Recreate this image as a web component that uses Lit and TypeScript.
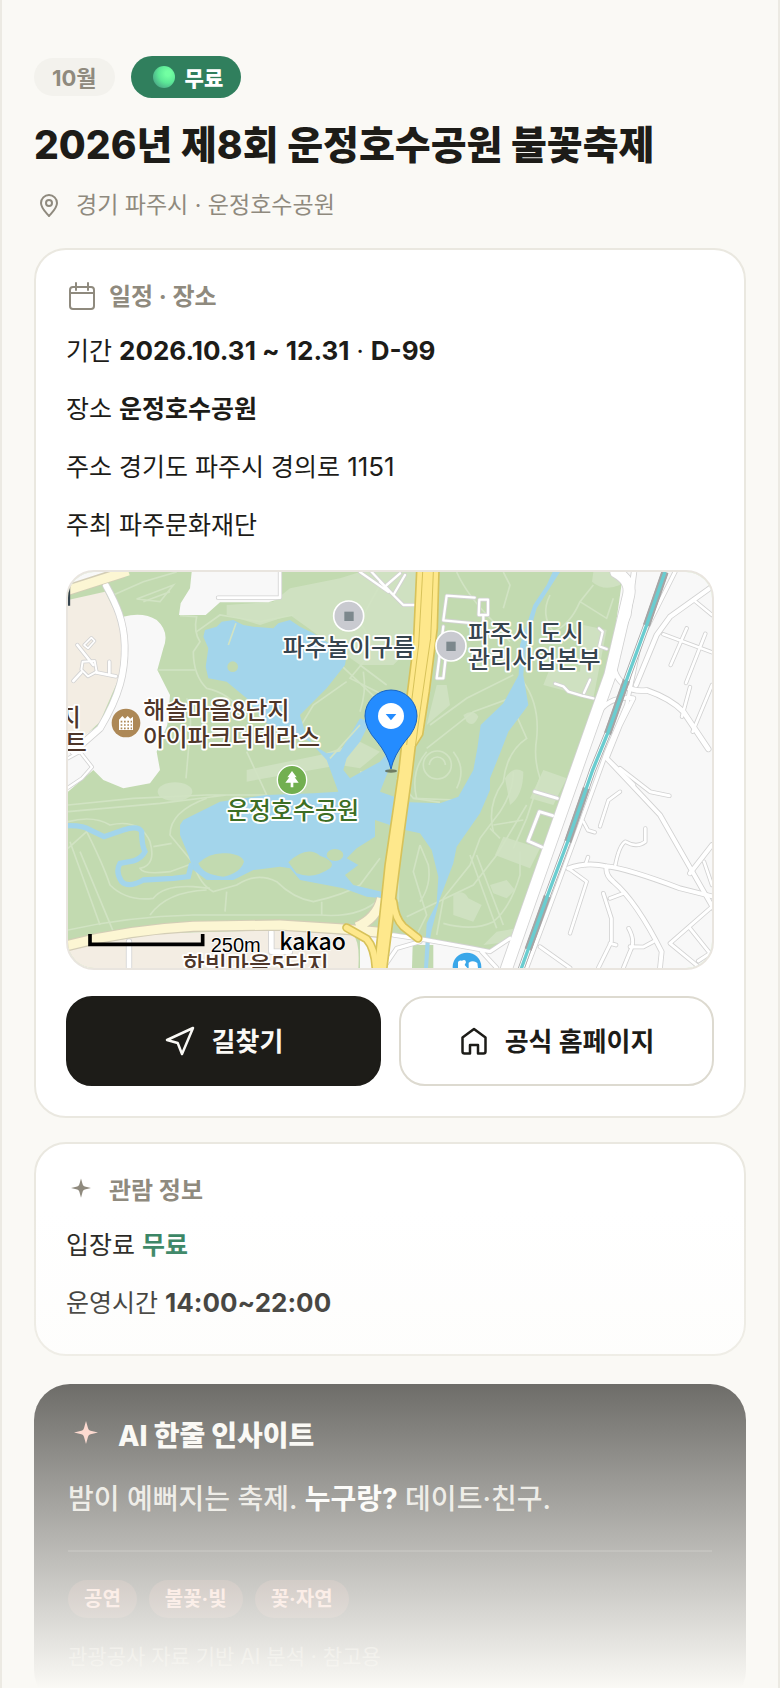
import { LitElement, html, css, svg } from "lit";
import { customElement } from "lit/decorators.js";

const STREETS: [string, number][] = [
  ["M138 62C170 120 192 170 194 240C196 320 180 390 120 490L40 560", 18],
  ["M52 240L100 300", 8],
  ["M72 240L94 218L104 228L84 250Z", 5],
  ["M68 290L104 288L110 320L84 334L64 314Z", 6],
  ["M64 322L40 348M108 322L168 334M148 290V328", 8],
  ["M24 580L60 560L96 606L66 640L24 668", 7],
  ["M474 98H660V21", 8],
  ["M960 50L1030 120H1064M900 21L985 80M935 21L1000 90M1035 30L1000 90M1020 25L980 60", 7],
  ["M1244 98L1160 92L1150 166L1252 176M1258 104H1284V150H1256ZM1150 184L1130 340H1150L1165 210M1270 150V176", 7],
  ["M1485 356L1510 364L1525 380L1565 392L1600 400M1572 384L1590 344M1617 190L1628 200L1618 244L1640 252", 7],
  ["M1424 680L1492 700M1478 752L1438 740L1404 828L1445 846", 9],
  ["M1668 21C1700 40 1712 60 1706 90L1650 330L1600 470L1385 1080L1340 1209", 34],
  ["M1722 21L1705 150L1660 260Q1650 330 1700 365Q1720 380 1760 376Q1830 400 1870 440L1945 552", 14],
  ["M1845 21L1740 230L1700 420L1640 560L1560 780L1460 1050L1400 1209", 10],
  ["M1956 65L1830 155L1790 210L1728 360", 13],
  ["M1956 262L1810 208M1880 190L1832 300M1936 206L1878 354M1890 366L1866 455M1956 360L1898 500M1900 104L1956 150", 8],
  ["M1610 450Q1650 390 1720 400L1680 480L1640 580L1720 660M1640 580L1800 750L1960 1030", 12],
  ["M1680 610L1770 680L1828 692", 9],
  ["M1680 680L1645 706L1620 784M1756 790V830Q1730 850 1696 830Q1678 840 1666 900", 8],
  ["M1956 840L1890 925M1525 910Q1580 890 1640 904Q1700 910 1860 970L1956 994M1640 904Q1635 930 1660 950Q1730 1010 1805 1160L1800 1209", 12],
  ["M1525 910L1580 950L1530 1105M1584 876L1576 900M1570 770L1584 796L1604 802M1932 890L1956 960", 8],
  ["M1630 985L1654 1060V1130L1615 1209M1690 985L1650 1000M1706 1090Q1728 1130 1710 1160L1690 1209M1710 1145L1750 1146L1780 1130M1650 1135L1668 1140", 9],
  ["M1956 1025L1830 1135L1920 1209M1890 1090L1950 1165L1915 1188M1440 1145L1530 1209", 9],
  ["M1000 1110L1100 1125L1240 1150L1290 1160L1350 1120M1265 1160L1310 1209M1080 1130L1010 1150L970 1209", 10],
  ["M207 1130V1209M634 1100V1160H690", 14],
];

const TRAILS = [
  "M360 152L410 155Q400 200 420 230L400 260Q400 330 440 370Q500 380 560 450",
  "M295 315H405M380 400Q400 440 385 560L378 640",
  "M230 102L340 60L300 110ZM250 110L330 80",
  "M160 90L250 50L350 21M410 200L480 150L600 170L700 150",
  "M24 720L220 700L440 690L620 690L560 560M24 740L300 715L500 690",
  "M24 770Q100 750 150 780Q240 760 270 830Q290 900 240 910Q250 930 330 920L400 895",
  "M440 700Q330 740 330 810L400 895M280 845L335 835",
  "M24 850L80 800Q130 900 150 960Q200 1010 280 1000Q310 960 400 965L450 970M30 830L120 1080M60 860L160 1100",
  "M400 895Q420 960 460 980L530 960Q590 920 650 950Q700 1000 760 1010Q850 990 900 960L960 880",
  "M270 1050Q320 980 440 975M500 980L495 1040M24 1095Q200 1055 400 1050H780Q900 1060 960 1000",
  "M785 1010V1050M860 350L760 420L700 520M920 280L870 340L990 400M800 260L990 440",
  "M900 300L980 360M910 320Q920 380 900 440M960 60L900 170L950 260",
  "M1190 21Q1220 90 1300 170L1350 230M1330 21L1350 60L1330 130",
  "M1470 90Q1440 150 1480 200Q1530 180 1560 110L1600 60M1560 110L1640 160L1660 100",
  "M1110 480L1220 400L1360 330M1100 550L1240 440L1350 400",
  "M1390 350Q1440 420 1430 520Q1420 580 1440 640L1400 760L1360 850",
  "M1360 430L1400 520Q1340 560 1330 650Q1280 720 1300 800",
  "M1090 600A42 42 0 1 1 1174 600A42 42 0 1 1 1090 600M1108 600A24 24 0 1 1 1156 600",
  "M1070 700Q1050 620 1100 560M1190 670Q1220 610 1180 560M1060 700L1190 705",
  "M1360 620Q1360 680 1320 740L1260 820L1230 900L1150 1000L1130 1110",
  "M1040 1055L1240 960L1310 870L1400 720M1230 870L1310 1090M1250 870L1330 1080M1380 860L1380 930Q1350 1030 1300 1070Q1240 1100 1150 1075",
  "M1080 840L1060 920L1100 1050L1070 1110M1080 840L1105 900Q1115 960 1080 1010M1015 820V1010",
  "M1300 780L1390 765M1290 790L1320 820M1010 640L1060 700L1140 712M900 620L960 640",
];

const RAIL = "M1815 21L1760 180L1705 330L1645 500L1598 615L1525 825L1465 985L1383 1213";

const mapArt = svg`
  <rect class="m-park" x="24" y="21" width="1932" height="1188"/>
  <g class="m-meadow">
    <path d="M500 120L640 110L690 70L840 40L900 21H1070L1060 240L1000 300L900 300L760 200L690 150L600 180L500 150Z"/>
    <path d="M560 615L780 570L900 530L960 560L900 610L840 600L560 650Z"/>
    <ellipse cx="345" cy="680" rx="52" ry="28"/>
    <path d="M1600 21H1690L1680 60Q1630 80 1596 50ZM1570 180L1640 195L1600 400L1450 360L1470 310L1560 320Z"/>
    <path d="M1130 360L1160 360L1170 420L1100 480ZM1210 450Q1240 430 1255 455Q1240 490 1220 470Z"/>
    <path d="M1330 815L1440 850L1410 910L1305 870ZM1180 990Q1210 970 1225 1000L1265 1020L1240 1070L1180 1050Z"/>
    <path d="M1290 960L1340 945L1365 975L1340 1000L1300 985ZM1270 1140L1310 1100L1370 1090L1350 1130Z"/>
    <path d="M1335 640Q1360 600 1390 620Q1390 690 1350 720ZM1450 615L1520 640L1480 720L1410 700Z"/>
  </g>
  <g class="m-trail">${TRAILS.map((d) => svg`<path d=${d}/>`)}</g>

  <g class="m-water">
    <path d="M430 215L435 195L470 185L485 170L520 165L550 180L580 185L640 190L655 175L690 165L720 185L760 205L860 270L855 300L800 370L720 450L735 500L760 540L800 565L840 560L900 460L930 470L900 530L860 580L850 615L870 640L960 590L985 560L1000 580L960 680L1050 712L1140 715L1195 695L1240 615L1252 550L1262 480L1330 415L1376 330L1380 240L1420 120L1460 60L1478 21H1500L1430 130L1396 250L1390 330L1405 420L1345 500L1322 560L1290 640V675L1260 745L1190 845L1180 895L1140 1000L1115 1095L1095 1209H1078L1098 1110L1100 1075L1130 1015L1135 935L1115 855L1080 805L1035 795L945 765L945 815L890 850L860 880L895 900L855 930L880 960L965 980V1000L920 995L850 970L720 945L690 910L660 905L580 915L520 945L440 945L400 915L385 870L360 810V780L370 765L480 710L620 690L760 685L835 680L800 585L750 530L690 500L620 475L560 400L500 350L445 340L437 305L445 250Z"/>
    <path class="m-creek" d="M20 782Q70 780 90 795L132 815L190 795Q235 780 245 800Q245 840 255 860Q245 880 220 888L180 895Q165 920 185 950Q205 970 250 945L340 940L385 935L395 895"/>
  </g>
  <g class="m-island">
    <circle cx="518" cy="305" r="16"/>
    <path d="M415 895Q450 860 500 865Q545 868 552 890Q540 925 490 935Q430 930 415 895Z"/>
    <path d="M685 892Q740 840 780 872Q830 890 810 910Q760 945 710 925Z"/>
    <ellipse cx="825" cy="870" rx="25" ry="18"/>
    <circle cx="795" cy="660" r="16"/>
  </g>
  <path class="m-thin" d="M528 175L505 240M810 580L900 480"/>

  <g class="m-plain">
    <path d="M24 21H200L24 80ZM190 155Q250 140 290 165Q330 200 310 250L292 315L330 390L322 480L290 560L300 615L270 655L190 670L130 645L100 615L24 680V540L120 480L190 350Z"/>
    <path d="M395 21L390 70L362 115L357 150H437L480 112H625L665 100V21Z"/>
    <path d="M1690 21H1956V1209H1330L1360 1120L1530 640L1650 300Z"/>
    <path d="M900 1105L1000 1110L1290 1160L1380 1100L1340 1209H900Z"/>
  </g>
  <path class="m-park" d="M1058 1140H1120V1209H1056Z"/>
  <path class="m-water" d="M1097 1125H1110L1104 1209H1092Z"/>
  <g class="m-block">
    <path d="M24 105L135 80L185 180L185 320L120 470L24 560Z"/>
    <path d="M24 1150L300 1105L660 1095L880 1110Q900 1130 895 1209H24Z"/>
  </g>

  ${STREETS.map(([d, w]) => svg`<path class="m-case" d=${d} stroke-width=${w + 5}/>`)}
  ${STREETS.map(([d, w]) => svg`<path class="m-street" d=${d} stroke-width=${w}/>`)}

  <path class="m-rail-bed" d=${RAIL}/>
  <path class="m-rail-gap" d=${RAIL}/>
  <path class="m-rail-dash" d=${RAIL}/>
  <path class="m-rail" d=${RAIL}/>

  <path class="m-pale-case" d="M20 76L190 21M20 1142Q200 1095 400 1084L660 1080L850 1092L960 1102M890 1086Q950 1060 965 1000"/>
  <path class="m-pale" d="M10 80L205 18M20 1142Q200 1095 400 1084L660 1080L850 1092L960 1102M890 1086Q950 1060 965 1000"/>

  <path class="m-ramp-case" d="M860 1088L920 1122Q945 1150 948 1215M1000 1010Q1005 1060 1030 1085L1074 1120"/>
  <path class="m-main" d="M1070 18H1137L1132 190L1108 380L1088 510L1066 545L1056 630L1026 850L980 1215H942L975 900L1016 620L1040 400L1060 240Z"/>
  <path class="m-ramp" d="M860 1088L920 1122Q945 1150 948 1215M1000 1010Q1005 1060 1030 1085L1074 1120"/>
  <path class="m-median" d="M1088 21L1076 240L1056 400L1040 540M1120 21L1112 220L1080 440L1066 545"/>

  <path class="m-scale" d="M90 1107V1138H428V1107"/>
  <text class="m-meter" x="452" y="1160">250m</text>
  <text class="m-brand" x="658" y="1154">kakao</text>

  <g class="m-label m-brown">
    <text x="-4" y="482">지</text>
    <text x="14" y="558">트</text>
    <text x="250" y="462">해솔마을8단지</text>
    <text x="250" y="542">아이파크더테라스</text>
    <text x="368" y="1226">한빛마을5단지</text>
  </g>
  <path class="m-edge" d="M27 62V122"/>
  <g class="m-label m-slate">
    <text x="668" y="272">파주놀이구름</text>
    <text x="1224" y="230">파주시 도시</text>
    <text x="1224" y="310">관리사업본부</text>
  </g>
  <text class="m-label m-forest" x="500" y="762">운정호수공원</text>

  <g class="m-poi">
    <circle cx="866" cy="153" r="45"/><rect x="853" y="140" width="28" height="28"/>
    <circle cx="1173" cy="243" r="45"/><rect x="1159" y="230" width="28" height="28"/>
  </g>
  <circle cx="198" cy="474" r="43" fill="#ad8856"/>
  <path fill="#fff" d="M177 495V464L187 453L195 461L203 453L211 461L219 455V495Z"/>
  <path stroke="#ad8856" stroke-width="5" stroke-dasharray="5 5" d="M182 470H216M182 480H216M182 490H216"/>
  <circle cx="696" cy="645" r="44" fill="#72af50" stroke="#fff" stroke-width="4"/>
  <path fill="#fff" d="M696 618L710 637H704L716 653H700V667H692V653H676L688 637H682Z"/>
  <circle cx="1221" cy="1206" r="43" fill="#3aa7e9"/>
  <path fill="#fff" d="M1194 1209V1192Q1196 1184 1206 1187Q1217 1182 1218 1192L1214 1200L1222 1209ZM1226 1209V1193Q1240 1184 1252 1194L1254 1209Z"/>

  <ellipse cx="993" cy="618" rx="18" ry="5" fill="#59644f" opacity=".8"/>
  <path fill="#248cff" stroke="#1764c4" stroke-width="3" d="M993 612Q984 570 950 528Q915 490 915 453A78 78 0 0 1 1071 453Q1071 490 1036 528Q1002 570 993 612Z"/>
  <circle cx="993" cy="453" r="39" fill="#fff"/>
  <path fill="#248cff" d="M977 447H1009L993 466Z"/>
`;

const calendar = svg`<rect x="4" y="5" width="24" height="22" rx="3"/><path d="M4 11H28M10 1V8M22 1V8"/>`;
const sparkle = svg`<path class="solid" d="M15 2.500L16.700 8.500Q17.200 10.200 18.800 10.600L25 12L18.800 13.600Q17.200 14 16.700 15.600L15 21.700L13.300 15.600Q12.800 14 11.200 13.600L5 12L11.200 10.600Q12.800 10.200 13.300 8.500Z"/>`;

@customElement("app-root")
export class AppRoot extends LitElement {
  static styles = css`
    :host {
      display: block;
      position: relative;
      box-sizing: border-box;
      height: 100vh;
      overflow: hidden;
      padding: 56px 32px 0;
      border: solid #eceae3;
      border-width: 0 2px;
      background: #faf9f5;
      color: #1d1c18;
      font-family: Inter, "Noto Sans CJK KR", sans-serif;
    }
    * { box-sizing: border-box; }
    h1, h2, p, dl, dd, ul { margin: 0; padding: 0; }
    .icon {
      flex: none;
      fill: none;
      stroke: currentColor;
      stroke-width: 2;
      stroke-linecap: round;
      stroke-linejoin: round;
    }
    .solid { fill: currentColor; stroke: none; }

    .pills { display: flex; align-items: center; gap: 16px; }
    .pill {
      display: flex;
      align-items: center;
      height: 38px;
      padding: 0 18px 3px;
      border-radius: 21px;
      background: #f3f2ed;
      color: #8f8a7e;
      font-size: 22px;
      font-weight: 700;
    }
    .pill.free {
      gap: 10px;
      height: 42px;
      padding: 0 18px 0 22px;
      background: #307f5d;
      color: #fff;
      font-weight: 800;
      font-size: 21px;
    }
    .orb {
      width: 22px;
      height: 22px;
      border-radius: 50%;
      background: radial-gradient(circle at 68% 34%, #72ffa2 0 12%, #5ce897 45%, #4cad88 78%, #659eac 100%);
    }

    h1 {
      margin-top: 20px;
      font-size: 39px;
      line-height: 54px;
      font-weight: 800;
    }
    .place {
      display: flex;
      align-items: center;
      gap: 15px;
      margin-top: 16px;
      padding-left: 3px;
      color: #8f8a7e;
      font-size: 23px;
      line-height: 34px;
    }

    .card {
      margin-top: 24px;
      padding: 30px;
      border: 2px solid #eae8e0;
      border-radius: 32px;
      background: #fff;
    }
    .place + .card { margin-top: 26px; }
    .card h2 {
      display: flex;
      align-items: center;
      gap: 13px;
      color: #8f8a7e;
      font-size: 24px;
      line-height: 34px;
      font-weight: 700;
    }
    .row {
      margin-top: 16px;
      font-size: 25px;
      line-height: 42px;
    }
    .row dt, .row dd { display: inline; }
    .num { font-size: 26px; }
    strong { font-weight: 700; }
    .green { color: #307f5d; }

    .map {
      display: block;
      width: 100%;
      height: 400px;
      margin-top: 24px;
      border: 2px solid #e9e5df;
      border-radius: 28px;
      overflow: hidden;
    }
    .actions {
      display: grid;
      grid-template-columns: 1fr 1fr;
      gap: 18px;
      margin-top: 26px;
    }
    .action {
      display: flex;
      align-items: center;
      justify-content: center;
      gap: 16px;
      height: 90px;
      padding: 0 0 3px;
      border: 2px solid #dddad0;
      border-radius: 26px;
      background: #fff;
      color: #1d1c18;
      font: inherit;
      font-size: 26px;
      font-weight: 700;
      text-decoration: none;
    }
    .action.primary {
      border-color: #1d1c18;
      background: #1d1c18;
      color: #faf9f5;
    }
    .action .icon { stroke-width: 2.500; }

    .insight {
      margin-top: 28px;
      padding: 34px;
      border-radius: 36px;
      background: #1d1c18;
      color: #faf9f5;
    }
    .insight h2 {
      display: flex;
      align-items: center;
      gap: 14px;
      font-size: 28px;
      line-height: 34px;
      font-weight: 800;
    }
    .insight .icon { color: #ffbfb0; }
    .summary {
      margin-top: 22px;
      font-size: 28px;
      line-height: 46px;
      font-weight: 500;
      color: #dddbd4;
    }
    .summary strong { color: #fff; }
    .tags {
      display: flex;
      gap: 12px;
      margin-top: 28px;
      padding-top: 28px;
      border-top: 2px solid #3c3b37;
      list-style: none;
    }
    .tags li {
      padding: 0 16px;
      border-radius: 19px;
      background: #4d332c;
      color: #ffbfb0;
      font-size: 20px;
      line-height: 38px;
      font-weight: 700;
    }
    .source {
      margin-top: 24px;
      color: #8f8a7e;
      font-size: 21px;
      line-height: 30px;
    }
    .fade {
      position: absolute;
      inset: auto 0 0;
      height: 478px;
      background: linear-gradient(rgba(250, 249, 245, 0), #faf9f5);
      pointer-events: none;
    }

    .m-park, .m-island { fill: #c2dab0; }
    .m-meadow { fill: #cfe1c1; }
    .m-water { fill: #a3d5eb; }
    .m-creek { fill: none; stroke: #a3d5eb; stroke-width: 16; }
    .m-plain { fill: #f8f8f8; }
    .m-block { fill: #f3ede3; }
    .m-trail, .m-thin { fill: none; stroke: #d1e3c3; stroke-width: 5; }
    .m-case, .m-street { fill: none; stroke-linecap: round; stroke-linejoin: round; }
    .m-case { stroke: #d2d2d2; }
    .m-street { stroke: #fff; }
    .m-rail, .m-rail-bed, .m-rail-dash, .m-rail-gap { fill: none; }
    .m-rail-bed { stroke: #a8a8a8; stroke-width: 20; }
    .m-rail-gap { stroke: #fff; stroke-width: 15; }
    .m-rail-dash { stroke: #a5a5a5; stroke-width: 22; stroke-dasharray: 170 175; }
    .m-rail { stroke: #6acdd0; stroke-width: 10; }
    .m-pale, .m-pale-case { fill: none; }
    .m-pale-case { stroke: #d3cdb6; stroke-width: 34; }
    .m-pale { stroke: #fcf6d3; stroke-width: 27; }
    .m-main { fill: #fee88c; stroke: #d7c25a; stroke-width: 5; }
    .m-ramp, .m-ramp-case { fill: none; stroke-linecap: round; }
    .m-ramp { stroke: #fee88c; stroke-width: 17; }
    .m-ramp-case { stroke: #d7c25a; stroke-width: 27; }
    .m-median { fill: none; stroke: #d7c25a; stroke-width: 3; }
    .m-scale { fill: none; stroke: #000; stroke-width: 11; }
    .m-edge { stroke: #36444e; stroke-width: 7; }
    .m-meter, .m-brand { stroke: #fff; stroke-width: 5; paint-order: stroke; }
    .m-meter { font: 60px "Liberation Sans", sans-serif; }
    .m-brand { font: 500 69px "Noto Sans CJK KR", sans-serif; }
    .m-label {
      font: 500 72px "Noto Sans CJK KR", sans-serif;
      stroke: #fff;
      stroke-width: 11;
      stroke-linejoin: round;
      paint-order: stroke;
    }
    .m-brown { fill: #4e3629; }
    .m-slate { fill: #36444e; }
    .m-forest { fill: #3d6e24; }
    .m-poi circle { fill: #c9cad0; stroke: #fff; stroke-width: 5; }
    .m-poi rect { fill: #7d888d; }
  `;

  render() {
    return html`
      <div class="pills">
        <span class="pill">10월</span>
        <span class="pill free"><i class="orb"></i>무료</span>
      </div>
      <h1>2026년 제8회 운정호수공원 불꽃축제</h1>
      <p class="place">
        <svg class="icon" width="24" height="24" viewBox="0 0 24 24"><path d="M12 23C8 18.500 4 15 4 10a8 8 0 0 1 16 0c0 5-4 8.500-8 13Z"/><circle cx="12" cy="10" r="3"/></svg>
        경기 파주시 · 운정호수공원
      </p>

      <section class="card">
        <h2><svg class="icon" width="30" height="30" viewBox="0 0 30 30">${calendar}</svg>일정 · 장소</h2>
        <dl>
          <div class="row"><dt>기간</dt> <dd><strong class="num">2026.10.31 ~ 12.31</strong> · <strong class="num">D-99</strong></dd></div>
          <div class="row"><dt>장소</dt> <dd><strong>운정호수공원</strong></dd></div>
          <div class="row"><dt>주소</dt> <dd>경기도 파주시 경의로 <span class="num">1151</span></dd></div>
          <div class="row"><dt>주최</dt> <dd>파주문화재단</dd></div>
        </dl>
        <svg class="map" viewBox="24 21 1932 1188" preserveAspectRatio="xMidYMid slice" role="img" aria-label="운정호수공원">${mapArt}</svg>
        <div class="actions">
          <button class="action primary" type="button">
            <svg class="icon" width="32" height="32" viewBox="0 0 32 32"><path d="M29 4L3 16L13.700 19L18 30Z"/></svg>
            길찾기
          </button>
          <a class="action" href="#">
            <svg class="icon" width="30" height="30" viewBox="0 0 30 30"><path d="M15 4L26.500 12.500V26.500Q26.500 28.500 24.500 28.500H19V20H11V28.500H5.500Q3.500 28.500 3.500 26.500V12.500Z"/></svg>
            공식 홈페이지
          </a>
        </div>
      </section>

      <section class="card">
        <h2><svg class="icon" width="30" height="30" viewBox="0 0 30 30">${sparkle}</svg>관람 정보</h2>
        <dl>
          <div class="row"><dt>입장료</dt> <dd><strong class="green">무료</strong></dd></div>
          <div class="row"><dt>운영시간</dt> <dd><strong class="num">14:00~22:00</strong></dd></div>
        </dl>
      </section>

      <section class="insight">
        <h2><svg class="icon" width="36" height="36" viewBox="0 0 30 30">${sparkle}</svg>AI 한줄 인사이트</h2>
        <p class="summary">밤이 예뻐지는 축제. <strong>누구랑?</strong> 데이트·친구.</p>
        <ul class="tags"><li>공연</li><li>불꽃·빛</li><li>꽃·자연</li></ul>
        <p class="source">관광공사 자료 기반 AI 분석 · 참고용</p>
      </section>
      <div class="fade"></div>
    `;
  }
}
